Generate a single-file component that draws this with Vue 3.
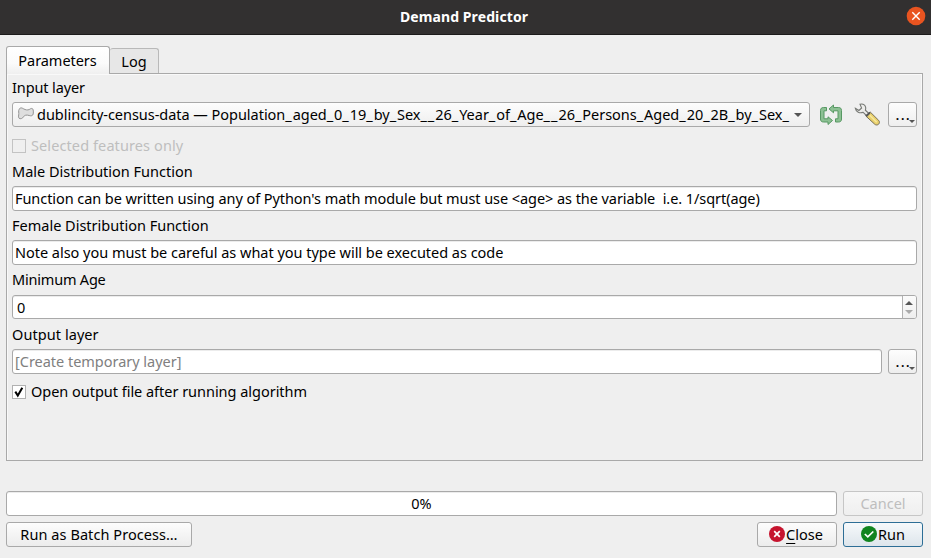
<script setup>
import { ref } from 'vue'

const layer = 'dublincity-census-data — Population_aged_0_19_by_Sex__26_Year_of_Age__26_Persons_Aged_20_2B_by_Sex_'
const layerParts = layer.split(/(_+)/).filter(Boolean)
const maleFn = ref("Function can be written using any of Python's math module but must use <age> as the variable  i.e. 1/sqrt(age)")
const femaleFn = ref('Note also you must be careful as what you type will be executed as code')
const minimumAge = ref(0)
</script>

<template>
  <div class="dialog">
    <header class="titlebar">
      <span class="title">Demand Predictor</span>
      <svg class="close-window" width="20" height="20" viewBox="0 0 20 20">
        <circle cx="10" cy="10" r="9.3" fill="#e95420" />
        <path d="M6.3 6.3l7.4 7.4M13.7 6.3l-7.4 7.4" stroke="#fff" stroke-width="1.4" />
      </svg>
    </header>

    <nav class="tabs">
      <div class="tab active"><span>Parameters</span></div>
      <div class="tab inactive"><span>Log</span></div>
    </nav>

    <main class="panel">
      <div class="label l28"><span class="t-input">Input layer</span></div>
      <div class="line">
        <div class="combo">
          <svg class="polygon" width="18" height="14" viewBox="0 0 18 14">
            <path d="M3.2 1.2C4.5.2 6 1.7 8 2.5S12 3 13.4 1.8c1.3-.8 2.6-.2 2.8 1.2.2 1.2.3 2.600 0 4-.4 1.8-2 2.200-4 1.500C9.500 7.700 7.500 8 6.500 9.800 5.500 11.500 3.500 12.300 2 11.200 1 10 1.800 8.500 1.800 6.500 1.800 4.500 1 2.500 3.200 1.200Z" fill="#dedede" stroke="#949494" />
          </svg>
          <span class="combo-text"><span v-for="(part, i) in layerParts" :key="i" :class="{ gap: part[0] === '_' }">{{ part }}</span></span>
          <i class="arrow"></i>
        </div>
        <svg class="iterate" width="24" height="22" viewBox="0 0 24 22">
          <g fill="#8cc093" stroke="#579863" stroke-width="1" stroke-linejoin="round">
            <path d="M7.500 3.500H4.500C2.500 3.500 1.500 4.500 1.500 6.500v8.500c0 2 1 3 3 3H9v2.500L13.500 16.500 9 12.800V14.800H5V6.800H7.500Z" />
            <path d="M16.500 18h3c2 0 3-1 3-3V6.500c0-2-1-3-3-3H14.500V1L10 4.900l4.500 3.900V6.800H19v8H16.500Z" />
          </g>
        </svg>
        <svg class="wrench" width="26" height="24" viewBox="0 0 26 24">
          <path d="M12 13.200l4.400-4 8.200 8.100c1.300 1.300.9 3 0 3.900s-2.700 1.200-3.900 0Z" fill="#e9d06c" stroke="#77705a" />
          <path d="M15.700 12.200l7 7" stroke="#f7e89e" stroke-width="1.500" />
          <path d="M1.300 5.300l3.600 2.200L7.600 5 6 1.200c2.700-.5 5 .7 5.600 3 .3 1.300 0 2.200-.2 3l3.800 3.600-2.200 2.300-3.800-3.800c-3.300 1.400-7.400-.3-7.900-4Z" fill="#ededeb" stroke="#777975" stroke-width="1.100" />
          <path d="M11.800 13.200l4.300-3.900" stroke="#555" stroke-width="1.800" />
        </svg>
        <button class="more"><b>...</b><i></i></button>
      </div>
      <div class="check disabled"><span class="box"></span><span class="t-sel">Selected features only</span></div>

      <div class="label l28"><span>Male Distribution Function</span></div>
      <div class="field"><span class="t-mfn">{{ maleFn }}</span></div>
      <div class="label l29"><span>Female Distribution Function</span></div>
      <div class="field"><span class="t-ffn">{{ femaleFn }}</span></div>
      <div class="label l30"><span class="t-min">Minimum Age</span></div>
      <div class="field spin">
        <span>{{ minimumAge }}</span>
        <div class="steps"><i class="up"></i><i class="down"></i></div>
      </div>
      <div class="label l30 out"><span class="t-out">Output layer</span></div>
      <div class="line">
        <div class="field output"><span class="t-ffn">[Create temporary layer]</span></div>
        <button class="more"><b>...</b><i></i></button>
      </div>
      <div class="check open">
        <span class="box">
          <svg width="12" height="12" viewBox="0 0 12 12"><path d="M2.300 5.600L4.800 9.500 9.300 1.800" fill="none" stroke="#000" stroke-width="2" /></svg>
        </span>
        <span class="t-ffn">Open output file after running algorithm</span>
      </div>
    </main>

    <div class="row progress-row">
      <div class="progress"><span>0%</span></div>
      <button class="btn cancel"><span>Cancel</span></button>
    </div>
    <footer class="row">
      <button class="btn batch"><span class="t-batch">Run as Batch Process…</span></button>
      <button class="btn closing">
        <svg width="16" height="16" viewBox="0 0 16 16"><circle cx="8" cy="8" r="8" fill="#c6142e" /><path d="M5.200 5.200l5.600 5.600M10.800 5.200l-5.600 5.600" stroke="#fff" stroke-width="1.700" /></svg>
        <span><u>C</u>lose</span>
      </button>
      <button class="btn run">
        <svg width="16" height="16" viewBox="0 0 16 16"><circle cx="8" cy="8" r="8" fill="#11841f" /><path d="M3.800 8l3 2.800 5.500-5.300" fill="none" stroke="#fff" stroke-width="1.700" /></svg>
        <span>Run</span>
      </button>
    </footer>
  </div>
</template>

<style>
body { background: #efefef; overflow: hidden; }
</style>

<style scoped>
* { box-sizing: border-box; }
.dialog { width: 931px; height: 558px; background: #efefef; color: #000; font: 14.5px/20px "Noto Sans", "Open Sans", sans-serif; display: flex; flex-direction: column; }
span { white-space: pre; }
svg { flex: none; display: block; }
button { font: inherit; color: inherit; padding: 0; margin: 0; }
.titlebar { height: 35px; flex: none; background: #323030; border-bottom: 1px solid #1c1b1b; display: grid; grid-template-columns: 1fr auto 1fr; align-items: center; color: #fff; padding: 0 5px 2px 2px; }
.title { grid-column: 2; font-size: 14px; font-weight: 700; letter-spacing: .1px; padding-top: 2px; }
.close-window { justify-self: end; }
.tabs { height: 39px; flex: none; padding: 11px 0 0 6px; display: flex; align-items: flex-start; position: relative; z-index: 1; }
.tab { display: flex; align-items: center; justify-content: center; border: 1px solid #a9a9a9; border-bottom: 0; border-radius: 3px 3px 0 0; }
.active { width: 104px; height: 28px; background: linear-gradient(#fff, #fbfbfb 60%, #efefef); padding: 0 1px 1px 0; letter-spacing: -.05px; }
.inactive { width: 49px; height: 25px; margin-top: 2px; background: #e7e7e7; border-color: #b9b9b9; border-left: 0; }
.panel { height: 388px; flex: none; margin: -1px 8px 0 6px; border: 1px solid #a9a9a9; box-shadow: inset 1px 1px #f9f9f9, inset -1px 0 #f9f9f9; padding: 0 5px; }
.label { display: flex; align-items: center; padding-bottom: 2px; }
.l28 { height: 28px; }
.l29 { height: 29px; }
.l30 { height: 30px; }
.out { padding-bottom: 1px; }
.line { display: flex; height: 25px; align-items: center; }
.combo { width: 798px; height: 25px; border: 1px solid #a9a9a9; border-radius: 3px; background: linear-gradient(#fdfdfd, #eee); display: flex; align-items: center; padding: 0 6px 0 4px; }
.polygon { margin: 0 2px 1px 0; }
.combo-text { width: 753px; overflow: hidden; padding-bottom: 2px; letter-spacing: -.03px; }
.gap { letter-spacing: .95px; }
.arrow { margin-left: 4px; border: 4.5px solid transparent; border-top: 4.5px solid #555; border-bottom: 0; }
.iterate { margin-left: 9px; }
.wrench { margin-left: 11px; }
.more { width: 29px; height: 25px; margin-left: auto; border: 1px solid #a9a9a9; border-radius: 3px; background: linear-gradient(#fdfdfd, #eee); display: flex; justify-content: flex-end; align-items: flex-end; padding: 0 1px 3px; }
.more b { font-weight: 500; line-height: 17px; letter-spacing: 1.2px; }
.more i { border: 3px solid transparent; border-top: 3px solid #555; border-bottom: 0; margin-left: -2px; }
.check { height: 31px; padding-top: 6px; display: flex; align-items: center; gap: 5px; }
.check > span + span { padding-bottom: 1px; }
.check.open > span + span { padding-bottom: 2px; }
.check.open { height: 35px; padding: 0; }
.box { width: 14px; height: 14px; border: 1px solid #b1b1b1; background: #fff; }
.disabled { color: #bebebe; }
.disabled .box { background: #efefef; border-color: #c3c3c3; }
.field { height: 25px; background: #fff; border: 1px solid #a9a9a9; border-radius: 3px; padding-left: 2px; display: flex; align-items: center; box-shadow: inset 0 1px #ececec; }
.field > span { padding-bottom: 2px; }
.spin { height: 24px; padding-left: 4px; justify-content: space-between; }
.spin > span { padding-bottom: 0; }
.steps { width: 14px; height: 22px; border-left: 1px solid #b1b1b1; background: linear-gradient(#fbfbfb, #efefef); display: flex; flex-direction: column; align-items: center; gap: 5px; padding: 5px 1px 0 0; border-radius: 0 2px 2px 0; }
.steps i { border: 4px solid transparent; }
.steps .up { border-bottom-color: #555; border-top: 0; }
.steps .down { border-top-color: #aaa; border-bottom: 0; }
.output { width: 870px; color: #808080; }
.row { display: flex; padding: 0 8px 0 6px; flex: none; }
.progress-row { margin: 30px 0 6px; gap: 6px; }
.progress { width: 831px; height: 25px; border: 1px solid #a9a9a9; border-radius: 3px; background: #fff; box-shadow: inset 0 1px #ececec; display: flex; align-items: center; justify-content: center; }
.progress span, .btn span { padding-bottom: 2px; }
.btn { width: 80px; height: 25px; border: 1px solid #a9a9a9; border-radius: 3px; background: linear-gradient(#fdfdfd, #ececec); display: flex; align-items: center; justify-content: center; }
.cancel { color: #bebebe; border-color: #c6c6c6; background: linear-gradient(#f7f7f7, #efefef); }
.batch { width: 186px; }
.closing { margin-left: auto; margin-right: 6px; padding-right: 2px; gap: 1px; }
.btn svg { margin-bottom: 1px; }
.run { border-color: #2d6e96; background: linear-gradient(#f6f9fb, #dde5eb); gap: 1px; }
u { text-underline-offset: 3px; text-decoration-thickness: 1px; }
.t-input { letter-spacing: -.12px; }
.t-min { letter-spacing: -.2px; }
.t-sel { letter-spacing: .1px; }
.t-mfn { letter-spacing: -.065px; }
.t-ffn { letter-spacing: -.025px; }
.t-out, .t-batch { letter-spacing: .07px; }
</style>
